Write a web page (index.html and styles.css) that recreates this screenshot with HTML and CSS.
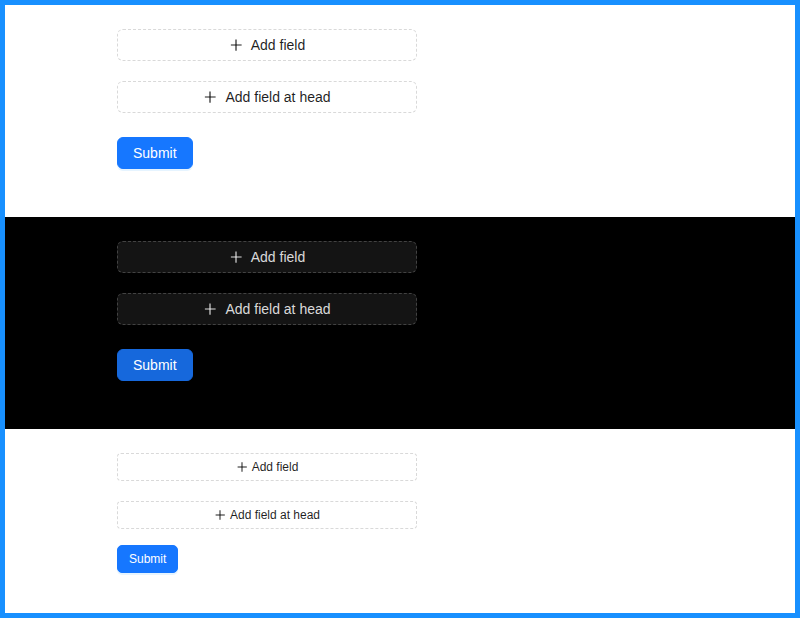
FILE: index.html
```html
<!DOCTYPE html>
<html>
<head>
<meta charset="utf-8">
<link rel="stylesheet" href="styles.css">
</head>
<body>
<div class="frame">
  <section class="panel light">
    <button class="btn dashed"><svg class="plus" viewBox="64 64 896 896"><path d="M482 152h60q8 0 8 8v704q0 8-8 8h-60q-8 0-8-8V160q0-8 8-8z"/><path d="M192 474h672q8 0 8 8v60q0 8-8 8H192q-8 0-8-8v-60q0-8 8-8z"/></svg><span>Add field</span></button>
    <button class="btn dashed"><svg class="plus" viewBox="64 64 896 896"><path d="M482 152h60q8 0 8 8v704q0 8-8 8h-60q-8 0-8-8V160q0-8 8-8z"/><path d="M192 474h672q8 0 8 8v60q0 8-8 8H192q-8 0-8-8v-60q0-8 8-8z"/></svg><span>Add field at head</span></button>
    <button class="btn primary">Submit</button>
  </section>
  <section class="panel dark">
    <button class="btn dashed"><svg class="plus" viewBox="64 64 896 896"><path d="M482 152h60q8 0 8 8v704q0 8-8 8h-60q-8 0-8-8V160q0-8 8-8z"/><path d="M192 474h672q8 0 8 8v60q0 8-8 8H192q-8 0-8-8v-60q0-8 8-8z"/></svg><span>Add field</span></button>
    <button class="btn dashed"><svg class="plus" viewBox="64 64 896 896"><path d="M482 152h60q8 0 8 8v704q0 8-8 8h-60q-8 0-8-8V160q0-8 8-8z"/><path d="M192 474h672q8 0 8 8v60q0 8-8 8H192q-8 0-8-8v-60q0-8 8-8z"/></svg><span>Add field at head</span></button>
    <button class="btn primary">Submit</button>
  </section>
  <section class="panel light small">
    <button class="btn dashed"><svg class="plus" viewBox="64 64 896 896"><path d="M482 152h60q8 0 8 8v704q0 8-8 8h-60q-8 0-8-8V160q0-8 8-8z"/><path d="M192 474h672q8 0 8 8v60q0 8-8 8H192q-8 0-8-8v-60q0-8 8-8z"/></svg><span>Add field</span></button>
    <button class="btn dashed"><svg class="plus" viewBox="64 64 896 896"><path d="M482 152h60q8 0 8 8v704q0 8-8 8h-60q-8 0-8-8V160q0-8 8-8z"/><path d="M192 474h672q8 0 8 8v60q0 8-8 8H192q-8 0-8-8v-60q0-8 8-8z"/></svg><span>Add field at head</span></button>
    <button class="btn primary">Submit</button>
  </section>
</div>
</body>
</html>
```

FILE: styles.css
```css
* { box-sizing: border-box; }
html, body { margin: 0; padding: 0; }
body {
  font-family: "Liberation Sans", Arial, sans-serif;
  background: #fff;
}
.frame {
  width: 800px;
  height: 618px;
  border: 5px solid #1890ff;
  display: flex;
  flex-direction: column;
}
.panel {
  display: flex;
  flex-direction: column;
  align-items: flex-start;
  padding: 24px 0 48px 112px;
}
.panel .btn:nth-child(1) { margin-bottom: 20px; }
.panel .btn:nth-child(2) { margin-bottom: 24px; }
.light { background: #fff; }
.dark { background: #000; }

.btn {
  font-family: inherit;
  font-size: 14px;
  height: 32px;
  border-radius: 6px;
  display: flex;
  align-items: center;
  justify-content: center;
  gap: 8px;
  padding: 0 15px;
  cursor: pointer;
  line-height: 1;
}
.dashed {
  width: 300px;
  border: 1px dashed #d9d9d9;
  background: #fff;
  color: rgba(0, 0, 0, 0.88);
}
.plus {
  width: 14px;
  height: 14px;
  fill: currentColor;
  flex: none;
}
.primary {
  border: 1px solid #1677ff;
  background: #1677ff;
  color: #fff;
  box-shadow: 0 2px 0 rgba(5, 145, 255, 0.1);
}
.dark .dashed {
  background: #141414;
  border-color: #424242;
  color: rgba(255, 255, 255, 0.85);
}
.dark .primary {
  background: #1668dc;
  border-color: #1668dc;
  box-shadow: none;
}

.small { padding-bottom: 40px; flex: 1; }
.small .btn {
  height: 28px;
  font-size: 12px;
  border-radius: 4px;
  gap: 4px;
  padding: 0 11px;
}
.small .dashed { width: 300px; }
.small .plus { width: 12px; height: 12px; }
.small .btn:nth-child(2) { margin-bottom: 16px; }
.small .btn:nth-child(1) { margin-bottom: 20px; }
.small .primary { border-radius: 5px; }
```
